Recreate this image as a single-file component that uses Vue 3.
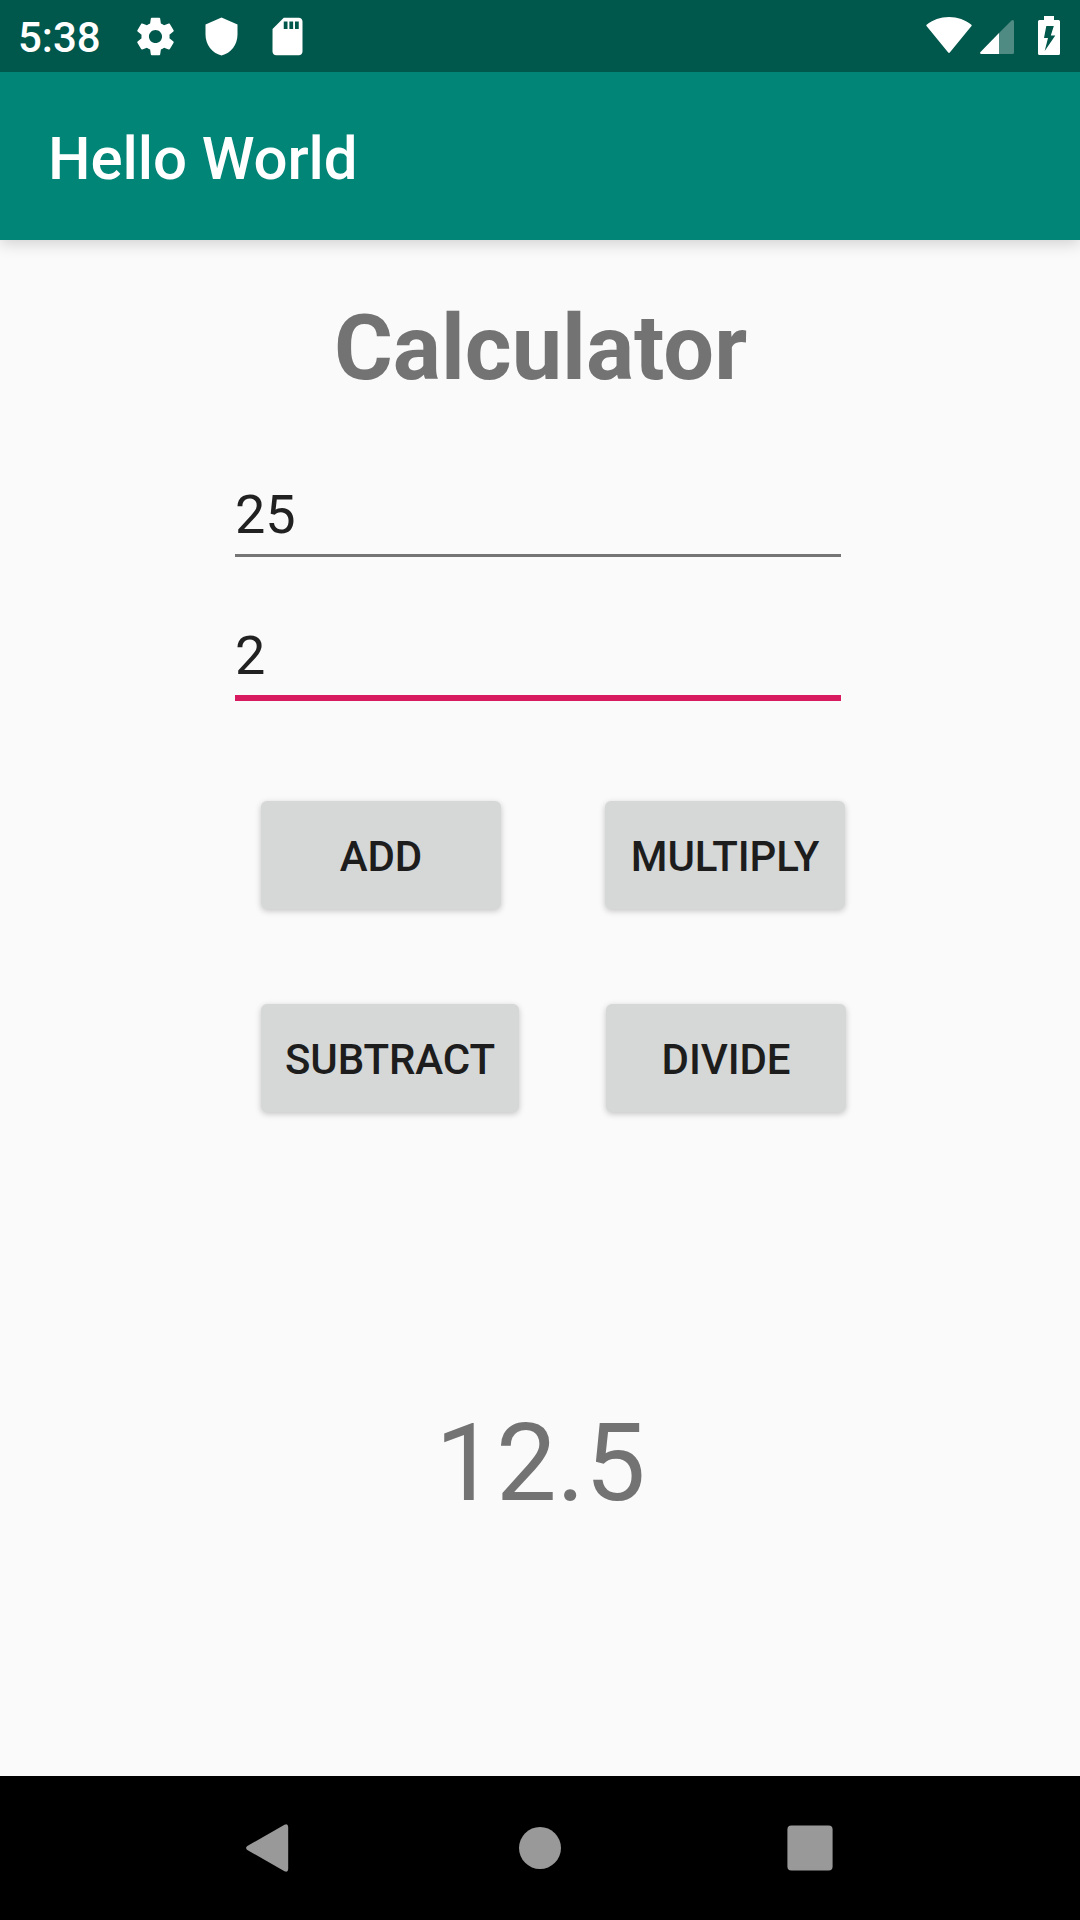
<script setup>
import { ref } from 'vue'

const first = ref('25')
const second = ref('2')
const result = ref('12.5')

const operations = [
  { id: 'add', label: 'ADD', run: (a, b) => a + b },
  { id: 'multiply', label: 'MULTIPLY', run: (a, b) => a * b },
  { id: 'subtract', label: 'SUBTRACT', run: (a, b) => a - b },
  { id: 'divide', label: 'DIVIDE', run: (a, b) => a / b },
]

function calculate(operation) {
  result.value = String(operation.run(Number(first.value), Number(second.value)))
}
</script>

<template>
  <div class="screen">
    <header class="status">
      <span class="clock">5:38</span>
      <div class="notifications">
        <svg width="45" height="45" viewBox="0 0 24 24" fill="#fff">
          <path d="M19.43 12.98c.04-.32.07-.64.07-.98s-.03-.66-.07-.98l2.11-1.65c.19-.15.24-.42.12-.64l-2-3.46c-.12-.22-.39-.3-.61-.22l-2.49 1c-.52-.4-1.08-.73-1.69-.98l-.38-2.65C14.46 2.18 14.25 2 14 2h-4c-.25 0-.46.18-.49.42l-.38 2.65c-.61.25-1.17.59-1.69.98l-2.49-1c-.23-.09-.49 0-.61.22l-2 3.46c-.13.22-.07.49.12.64l2.11 1.65c-.04.32-.07.65-.07.98s.03.66.07.98l-2.11 1.65c-.19.15-.24.42-.12.64l2 3.46c.12.22.39.3.61.22l2.49-1c.52.4 1.08.73 1.69.98l.38 2.65c.03.24.24.42.49.42h4c.25 0 .46-.18.49-.42l.38-2.65c.61-.25 1.17-.59 1.69-.98l2.49 1c.23.09.49 0 .61-.22l2-3.46c.12-.22.07-.49-.12-.64l-2.11-1.65zM12 15.5c-1.93 0-3.5-1.57-3.5-3.5s1.57-3.5 3.5-3.5 3.5 1.57 3.5 3.5-1.57 3.5-3.5 3.5z" />
        </svg>
        <svg width="45" height="45" viewBox="0 0 45 45" fill="#fff">
          <path d="M22.5 3.5L6.5 10.5V20.5C6.5 30.5 13 39.2 22.5 41.5C32 39.2 38.5 30.5 38.5 20.5V10.5Z" />
        </svg>
        <svg width="45" height="45" viewBox="0 0 24 24" fill="#fff">
          <path d="M18 2h-8L4.02 8 4 20c0 1.1.9 2 2 2h12c1.1 0 2-.9 2-2V4c0-1.1-.9-2-2-2zm-6 6h-2V4h2v4zm3 0h-2V4h2v4zm3 0h-2V4h2v4z" />
        </svg>
      </div>
      <div class="system">
        <svg width="46" height="40" viewBox="0 0 46 40" fill="#fff">
          <path d="M.6 8.8C6.7 3.9 14.3 1 23 1s16.300 2.900 22.400 7.800q.6.600.100 1.200L24 36.300q-1 1.300-2 0L.5 10q-.5-.6.1-1.200Z" />
        </svg>
        <svg class="signal" width="34" height="40" viewBox="0 0 34 40">
          <path d="M34 5.500V36.500Q34 38 32.500 38H19V17L31.500 4.500Q33.500 3.300 34 5.500Z" fill="#fff" fill-opacity=".31" />
          <path d="M19 17V38H1.500Q-.7 37.700.5 36Z" fill="#fff" />
        </svg>
        <svg class="battery" width="22" height="40" viewBox="0 0 22 40" fill="#fff" fill-rule="evenodd">
          <path d="M6 0H16V4H20.500Q22 4 22 5.500V37.500Q22 39 20.500 39H1.500Q0 39 0 37.500V5.500Q0 4 1.500 4H6ZM8.300 10L6 22H10L6.700 35L17.300 19.500H12.800L15.800 10Z" />
        </svg>
      </div>
    </header>

    <div class="appbar">Hello World</div>

    <main class="content">
      <h1 class="heading">Calculator</h1>
      <input v-model="first" class="field" inputmode="decimal" />
      <input v-model="second" class="field active" inputmode="decimal" />
      <div class="pad">
        <button
          v-for="operation in operations"
          :key="operation.id"
          :class="['key', operation.id]"
          @click="calculate(operation)"
        >{{ operation.label }}</button>
      </div>
      <output class="result">{{ result }}</output>
    </main>

    <nav class="navbar">
      <svg width="48" height="48" viewBox="0 0 48 48" fill="#999">
        <path d="M1.300 22L38.500 .8Q42 -.8 42.200 3V45Q42 48.800 38.500 47.200L1.300 26Q-1.100 24 1.300 22Z" />
      </svg>
      <svg width="48" height="48" viewBox="0 0 48 48" fill="#999">
        <circle cx="24" cy="24" r="21" />
      </svg>
      <svg width="48" height="48" viewBox="0 0 48 48" fill="#999">
        <rect x="1.400" y="1.400" width="45.200" height="45.200" rx="4" />
      </svg>
    </nav>
  </div>
</template>

<style>
body {
  margin: 0;
}
</style>

<style scoped>
.screen {
  display: flex;
  flex-direction: column;
  width: 1080px;
  height: 1920px;
  overflow: hidden;
  background: #fafafa;
  font-family: Roboto, sans-serif;
}

svg {
  display: block;
  flex: none;
}

.status {
  display: flex;
  align-items: center;
  flex: none;
  box-sizing: border-box;
  height: 72px;
  padding: 0 20px 0 18px;
  background: #00574b;
}

.clock {
  width: 114.5px;
  padding-top: 3px;
  color: #fff;
  font-size: 42px;
  font-weight: 500;
  line-height: 50px;
}

.notifications {
  display: flex;
  gap: 21px;
}

.system {
  display: flex;
  margin-left: auto;
}

.signal {
  margin-left: 8px;
}

.battery {
  margin-left: 24px;
}

.appbar {
  z-index: 1;
  flex: none;
  box-sizing: border-box;
  height: 168px;
  padding: 5px 48px 0;
  background: #008577;
  box-shadow: 0 4px 14px rgba(0, 0, 0, 0.16);
  clip-path: inset(0 0 -24px 0);
  color: #fff;
  font-size: 60px;
  font-weight: 500;
  line-height: 163px;
  letter-spacing: -0.1px;
}

.content {
  display: flex;
  flex: 1;
  flex-direction: column;
  align-items: center;
  padding-top: 56px;
}

.heading {
  margin: 0 0 81px 1px;
  color: #737373;
  font-size: 90px;
  font-weight: 700;
  line-height: 106px;
}

.field {
  box-sizing: border-box;
  width: 606px;
  height: 74px;
  margin: 0 4px 67px 0;
  padding: 0 0 8px;
  border: 0;
  border-bottom: 3px solid #757575;
  border-radius: 0;
  outline: none;
  background: none;
  color: #212121;
  font-family: inherit;
  font-size: 54px;
  line-height: 63px;
}

.active {
  height: 77px;
  margin-bottom: 100px;
  border-bottom: 6px solid #d81b60;
}

.pad {
  display: grid;
  grid-template-columns: 344px 241px;
  row-gap: 95px;
  margin-left: 27px;
}

.key {
  width: 240px;
  height: 108px;
  padding: 3px 0 0;
  border: 0;
  border-radius: 6px;
  background: #d6d7d7;
  box-shadow: 0 2px 6px rgba(0, 0, 0, 0.22);
  color: #1d1d1d;
  font-family: inherit;
  font-size: 42px;
  font-weight: 500;
  line-height: 49px;
  letter-spacing: -0.1px;
}

.subtract {
  width: 258px;
}

.divide {
  margin-left: 1px;
}

.result {
  margin-top: 288px;
  margin-left: 1px;
  color: #737373;
  font-size: 108px;
  line-height: 126px;
}

.navbar {
  display: flex;
  align-items: center;
  justify-content: center;
  gap: 222px;
  flex: none;
  height: 144px;
  background: #000;
}
</style>
